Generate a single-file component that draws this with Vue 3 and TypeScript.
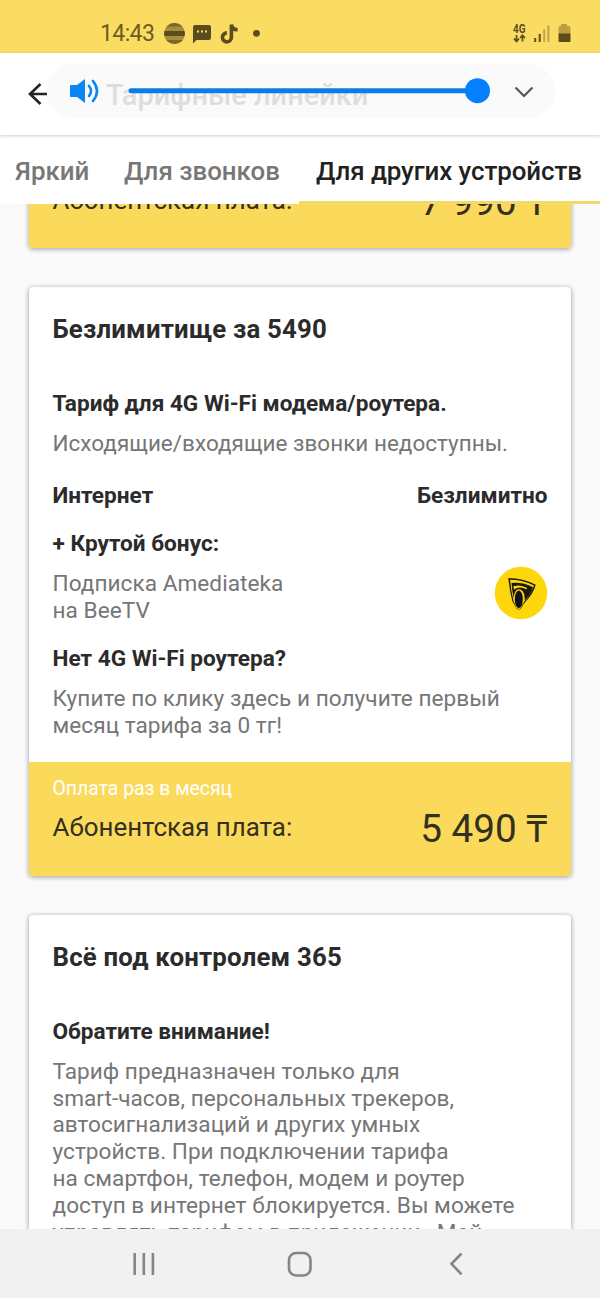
<script setup lang="ts">
const tabs: { label: string; cls: string }[] = [
  { label: 'Яркий', cls: 'bright' },
  { label: 'Для звонков', cls: 'calls' },
  { label: 'Для других устройств', cls: 'devices active' },
]
const controlLines: string[] = [
  'Тариф предназначен только для',
  'smart-часов, персональных трекеров,',
  'автосигнализаций и других умных',
  'устройств. При подключении тарифа',
  'на смартфон, телефон, модем и роутер',
  'доступ в интернет блокируется. Вы можете',
  'управлять тарифом в приложении «Мой',
]
</script>

<template>
  <div class="screen">
    <header class="status">
      <span class="time">14:43</span>
      <svg class="st-left" width="106" height="26" viewBox="164 20 106 26">
        <defs><clipPath id="bee"><circle cx="174.500" cy="33.500" r="10.500" /></clipPath></defs>
        <g clip-path="url(#bee)">
          <rect x="164" y="22" width="21" height="24" fill="#a68d3c" />
          <rect x="164" y="22" width="21" height="4.500" fill="#79662a" />
          <rect x="164" y="31" width="21" height="5" fill="#5b4c1d" />
          <rect x="164" y="40" width="21" height="5" fill="#79662a" />
        </g>
        <path d="M195 25h14q2 0 2 2v11q0 2-2 2h-12.500l-3.500 3.500V27q0-2 2-2z" fill="#5b4c1d" />
        <path d="M197 31.500h2M201 31.500h2M205 31.500h2" stroke="#fbdc62" stroke-width="1.800" />
        <path d="M231.400 24.500v12.600a4.500 4.500 0 1 1-4.500-4.200M231.400 24.500c.3 3.300 2.700 5.200 6.200 5.200" fill="none" stroke="#5b4c1d" stroke-width="3.600" />
        <circle cx="256.500" cy="33.300" r="3.400" fill="#5b4c1d" />
      </svg>
      <svg class="st-right" width="60" height="26" viewBox="512 20 60 26">
        <text x="513" y="33" class="net" textLength="12.500" lengthAdjust="spacingAndGlyphs">4G</text>
        <path d="M516.500 35v6M514 38.700l2.500 2.700 2.500-2.700M522.500 41.500v-6M520 38l2.500-2.700 2.500 2.700" fill="none" stroke="#5b4c1d" stroke-width="1.700" />
        <path d="M535.200 38v4M539.700 34v8" stroke="#5b4c1d" stroke-width="2" />
        <path d="M544.200 29.500v12.500M548.400 25.500v16.500" stroke="#c2a548" stroke-width="2" />
        <path d="M561 24h6v2h2q1.500 0 1.500 1.500V34h-12v-6.500q0-1.500 1.500-1.500h1z" fill="#bd9f43" />
        <path d="M558.500 33.500h12V41q0 1-1 1h-10q-1 0-1-1z" fill="#5b4c1d" />
      </svg>
    </header>

    <div class="appbar">
      <svg class="back" width="24" height="26" viewBox="0 0 24 26">
        <path d="M21 13H4M14.500 3L4 13l10.500 10" fill="none" stroke="#252525" stroke-width="2.600" />
      </svg>
      <h1 class="heading">Тарифные линейки</h1>
      <div class="volume">
        <svg width="508" height="52" viewBox="0 0 508 52">
          <path d="M24 20h6l8-6v24l-8-6h-6q-1 0-1-1v-10q0-1 1-1z" fill="#0b86f5" />
          <path d="M42 21q4 5 0 10M46 16q8 10 0 20" fill="none" stroke="#0b86f5" stroke-width="2.600" stroke-linecap="round" />
          <path d="M84 25.700H430" stroke="#0b7de8" stroke-width="5" stroke-linecap="round" />
          <circle cx="430.500" cy="25.700" r="12.500" fill="#0480ff" />
          <path d="M468.500 22.500l8.500 8.500 8.500-8.500" fill="none" stroke="#565656" stroke-width="2.200" />
        </svg>
      </div>
    </div>

    <nav class="tabs">
      <span v-for="t in tabs" :key="t.label" class="tab" :class="t.cls">{{ t.label }}</span>
    </nav>

    <main class="content">
      <section class="card first">
        <div class="footer">
          <div class="fee"><span class="fee-label">Абонентская плата:</span><span class="price">7 990 ₸</span></div>
        </div>
      </section>

      <section class="card">
        <div class="body">
          <h2 class="title">Безлимитище за 5490</h2>
          <h3 class="sub">Тариф для 4G Wi-Fi модема/роутера.</h3>
          <p class="calls-note">Исходящие/входящие звонки недоступны.</p>
          <div class="row"><b>Интернет</b><b>Безлимитно</b></div>
          <h3 class="bonus-title">+ Крутой бонус:</h3>
          <div class="bonus">
            <p>Подписка Amediateka<br />на BeeTV</p>
            <svg class="logo" width="54" height="54" viewBox="0 0 54 54">
              <circle cx="27" cy="27" r="26.300" fill="#fdd60b" />
              <path d="M14.300 12Q29 12 41.700 18.800Q40 27 30 37.500L27 42.500Q24.500 44.500 22.500 42.500L18.300 35Q15.500 24 14.300 12z" fill="#1b1810" />
              <path d="M16 13.800Q29 13.800 40 19.400Q37.500 27 30 36L26.500 42.500Q24.500 43.500 22.500 42L19.500 35Q17 25 16 13.800z" fill="#fdd60b" />
              <path d="M17.500 17Q29 16 39 21.300Q37 28 30.700 34.500Q31 26 27 23.700Q20.500 21.500 19.700 32Q18 25 17.500 17z" fill="#1b1810" />
              <path d="M19.300 20.300Q27 18 33 22L32.500 23.500Q26 19.500 20 23.500z" fill="#fdd60b" />
              <ellipse cx="24.800" cy="33.300" rx="4" ry="8.800" fill="#11101e" />
            </svg>
          </div>
          <h3 class="router">Нет 4G Wi-Fi роутера?</h3>
          <p>Купите по клику здесь и получите первый<br />месяц тарифа за 0 тг!</p>
        </div>
        <div class="footer">
          <div class="note">Оплата раз в месяц</div>
          <div class="fee"><span class="fee-label">Абонентская плата:</span><span class="price">5 490 ₸</span></div>
        </div>
      </section>

      <section class="card">
        <div class="body">
          <h2 class="title">Всё под контролем 365</h2>
          <h3 class="sub">Обратите внимание!</h3>
          <p class="control"><template v-for="l in controlLines" :key="l">{{ l }}<br /></template></p>
        </div>
      </section>
    </main>

    <footer class="navbar">
      <svg width="600" height="69" viewBox="0 0 600 69">
        <g fill="none" stroke="#858585" stroke-width="2.600">
          <path d="M134.700 24v22M143.800 24v22M152.900 24v22" />
          <rect x="289" y="24" width="21.500" height="22.500" rx="7" />
          <path d="M461.500 24.500L451.500 34.800l10 10.500" />
        </g>
      </svg>
    </footer>
  </div>
</template>

<style>
body { margin: 0; }
</style>

<style scoped>
.screen {
  width: 600px; height: 1298px; overflow: hidden; display: flex; flex-direction: column;
  background: #fafafa; font-family: Roboto, "Noto Sans", sans-serif; color: #2b2b2b;
}
h1, h2, h3, p { margin: 0; white-space: nowrap; }
.status { height: 53px; flex: none; background: #fbdc62; display: flex; align-items: flex-start; }
.time { margin: 20px 0 0 100px; width: 64px; flex: none; font-size: 23px; line-height: 28px; letter-spacing: -.6px; color: #6b5b25; }
.st-left { margin-top: 20px; }
.st-right { margin: 20px 28px 0 auto; }
.net { font: 700 12.5px Roboto, sans-serif; fill: #5b4c1d; }
.appbar { height: 82px; flex: none; position: relative; z-index: 2; background: #fff; display: flex; align-items: center; box-shadow: 0 1px 3px rgba(0, 0, 0, .2); }
.back { margin-left: 26px; flex: none; }
.heading { margin: 1px 0 0 56px; font-size: 29px; line-height: 34px; font-weight: 500; color: #222; }
.volume { position: absolute; left: 47px; top: 12px; width: 508px; height: 52px; border-radius: 26px; background: rgba(249, 249, 249, .87); box-shadow: 0 0 1px 1px rgba(0, 0, 0, .025); }
.volume svg { display: block; }
.tabs { height: 69px; flex: none; position: relative; z-index: 1; background: #fff; display: flex; }
.tab { box-sizing: border-box; height: 69px; padding-top: 20px; font-size: 25.9px; line-height: 32px; font-weight: 500; color: #777; white-space: nowrap; }
.bright { width: 109px; padding-left: 15px; }
.calls { width: 190px; padding-left: 15px; }
.devices { width: 301px; padding-left: 17px; letter-spacing: -.07px; }
.tab.active { color: #212121; border-bottom: 3px solid #f3d965; }
.content { flex: 1; min-height: 0; overflow: hidden; padding: 0 29px; }
.card { background: #fff; border-radius: 4px; margin-bottom: 39px; box-shadow: 0 1px 4px 1px rgba(0, 0, 0, .28); }
.card.first { margin-top: -69.5px; }
.first .footer { padding-top: 45px; }
.first .fee { margin-top: 0; }
.body { padding: 29px 23.5px 24px; font-size: 22.6px; line-height: 27px; }
.body p { position: relative; top: 1px; color: #767676; line-height: 26.8px; letter-spacing: .04px; }
.body .calls-note { top: 0; font-size: 22.45px; }
.body .control { letter-spacing: .02px; }
.title { font-size: 25.8px; font-weight: 700; line-height: 27px; letter-spacing: .2px; }
h3, .row b { font-size: 22.6px; font-weight: 700; line-height: 27px; }
.sub { margin: 47px 0 13px; }
.row { display: flex; justify-content: space-between; margin: 25px 0 21.5px; }
.bonus-title { margin-bottom: 12.5px; }
.bonus { display: flex; justify-content: space-between; height: 54px; margin-bottom: 21px; }
.logo { margin: -4px -.5px 0 0; }
.router { margin-bottom: 13px; }
.footer { box-sizing: border-box; height: 113.5px; padding: 16px 23.5px 0; background: #fbd95b; border-radius: 0 0 4px 4px; }
.note { font-size: 19.4px; line-height: 22px; color: #fff; }
.fee { display: flex; justify-content: space-between; align-items: center; height: 40px; margin-top: 7px; color: #33301f; }
.fee-label { font-size: 25.9px; }
.price { font-size: 38.7px; }
.navbar { height: 69px; flex: none; position: relative; background: #f1f1f1; }
.navbar svg { display: block; }
</style>
